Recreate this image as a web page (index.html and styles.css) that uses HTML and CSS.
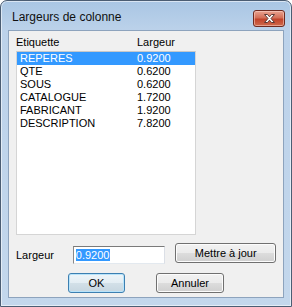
FILE: index.html
```html
<!DOCTYPE html>
<html lang="fr">
<head>
    <meta charset="UTF-8">
    <title>Largeurs de colonne</title>
    <link rel="stylesheet" href="styles.css">
</head>
<body>
    <div class="window">
        <div class="titlebar">
            <span class="title">Largeurs de colonne</span>
            <button class="close" type="button" aria-label="Fermer">
                <svg width="15" height="11" viewBox="0 0 15 11">
                    <path d="M2.5 1.5 H5.5 L7.5 3.8 L9.5 1.5 H12.5 L9 5.5 L12.5 9.5 H9.5 L7.5 7.2 L5.5 9.5 H2.5 L6 5.5 Z"
                          fill="#ffffff" stroke="#5b3a36" stroke-width="1" stroke-linejoin="round"/>
                </svg>
            </button>
        </div>

        <div class="client">
            <div class="list-header">
                <span class="col-name">Etiquette</span>
                <span class="col-width">Largeur</span>
            </div>

            <div class="list">
                <div class="row selected"><span class="col-name">REPERES</span><span class="col-width">0.9200</span></div>
                <div class="row"><span class="col-name">QTE</span><span class="col-width">0.6200</span></div>
                <div class="row"><span class="col-name">SOUS</span><span class="col-width">0.6200</span></div>
                <div class="row"><span class="col-name">CATALOGUE</span><span class="col-width">1.7200</span></div>
                <div class="row"><span class="col-name">FABRICANT</span><span class="col-width">1.9200</span></div>
                <div class="row"><span class="col-name">DESCRIPTION</span><span class="col-width">7.8200</span></div>
            </div>

            <div class="edit-row">
                <label for="largeur">Largeur</label>
                <div class="field" id="largeur"><span class="field-sel">0.9200</span></div>
                <button type="button" class="btn btn-update">Mettre à jour</button>
            </div>

            <div class="action-row">
                <button type="button" class="btn btn-default btn-ok">OK</button>
                <button type="button" class="btn btn-cancel">Annuler</button>
            </div>
        </div>
    </div>
</body>
</html>
```

FILE: styles.css
```css
* {
    box-sizing: border-box;
    margin: 0;
    padding: 0;
}

body {
    width: 292px;
    height: 307px;
    background: #ffffff;
    font-family: 'Liberation Sans', Arial, sans-serif;
    font-size: 11px;
    color: #000;
}

.window {
    width: 292px;
    height: 307px;
    border: 1px solid #4b5d73;
    border-radius: 7px 7px 0 0;
    background: linear-gradient(#a9c6e4, #bcd2ea 30px, #c3d7ec);
    box-shadow: inset 0 0 0 1px rgba(255, 255, 255, 0.55);
    padding: 0 7px 8px;
    display: flex;
    flex-direction: column;
}

.titlebar {
    height: 29px;
    display: flex;
    align-items: flex-start;
    justify-content: space-between;
}

.title {
    font-size: 12px;
    margin: 9px 0 0 4px;
    color: #101010;
}

.close {
    width: 32px;
    height: 17px;
    margin: 9px -1px 0 0;
    border: 1px solid #6e2a20;
    border-radius: 3px;
    background: linear-gradient(#e9a391, #d36f58 45%, #c1432b 55%, #cf6a4c);
    box-shadow: inset 0 0 0 1px rgba(255, 220, 210, 0.5);
    display: flex;
    align-items: center;
    justify-content: center;
}

.client {
    flex: 1;
    background: #f0f0f0;
    border: 1px solid #8da3bd;
    padding: 5px 7px 0;
}

.list-header {
    display: flex;
    height: 13px;
    line-height: 13px;
}

.list-header .col-name {
    width: 121px;
}

.list {
    width: 180px;
    height: 184px;
    margin-top: 2px;
    background: #fff;
    border: 1px solid #d5d5d5;
    border-top-color: #c8c8c8;
}

.row {
    display: flex;
    height: 13px;
    line-height: 13px;
    padding-left: 3px;
}

.row .col-name {
    width: 117px;
}

.row.selected {
    background: #3399ff;
    color: #fff;
}

.edit-row {
    display: flex;
    align-items: flex-start;
    margin-top: 8px;
}

.edit-row label {
    width: 57px;
    margin-top: 6px;
}

.field {
    width: 93px;
    height: 18px;
    margin-top: 3px;
    background: #fff;
    border: 1px solid #7a7a7a;
    border-color: #abadb3 #dbdfe6 #e3e9ef #e2e3ea;
    border-top-color: #7a7a7a;
    border-left-color: #8a8a8a;
    padding: 2px 0 0 2px;
    line-height: 13px;
}

.field-sel {
    background: #3399ff;
    color: #fff;
    padding: 0 1px 0 0;
}

.btn {
    font-family: 'Liberation Sans', Arial, sans-serif;
    font-size: 11px;
    color: #000;
    height: 20px;
    border: 1px solid #707070;
    border-radius: 3px;
    background: linear-gradient(#f2f2f2, #ebebeb 50%, #dddddd 50%, #cfcfcf);
    box-shadow: inset 0 0 0 1px #fcfcfc;
}

.btn-update {
    width: 101px;
    margin-left: 10px;
}

.action-row {
    display: flex;
    margin-top: 9px;
}

.btn-ok {
    width: 57px;
    margin-left: 52px;
}

.btn-default {
    border-color: #3c7fb1;
    background: linear-gradient(#eef5f9, #e3edf3 50%, #d3e0e8 50%, #c6d6e0);
    box-shadow: inset 0 0 0 1px #b8e3fa;
}

.btn-cancel {
    width: 68px;
    margin-left: 31px;
}
```
